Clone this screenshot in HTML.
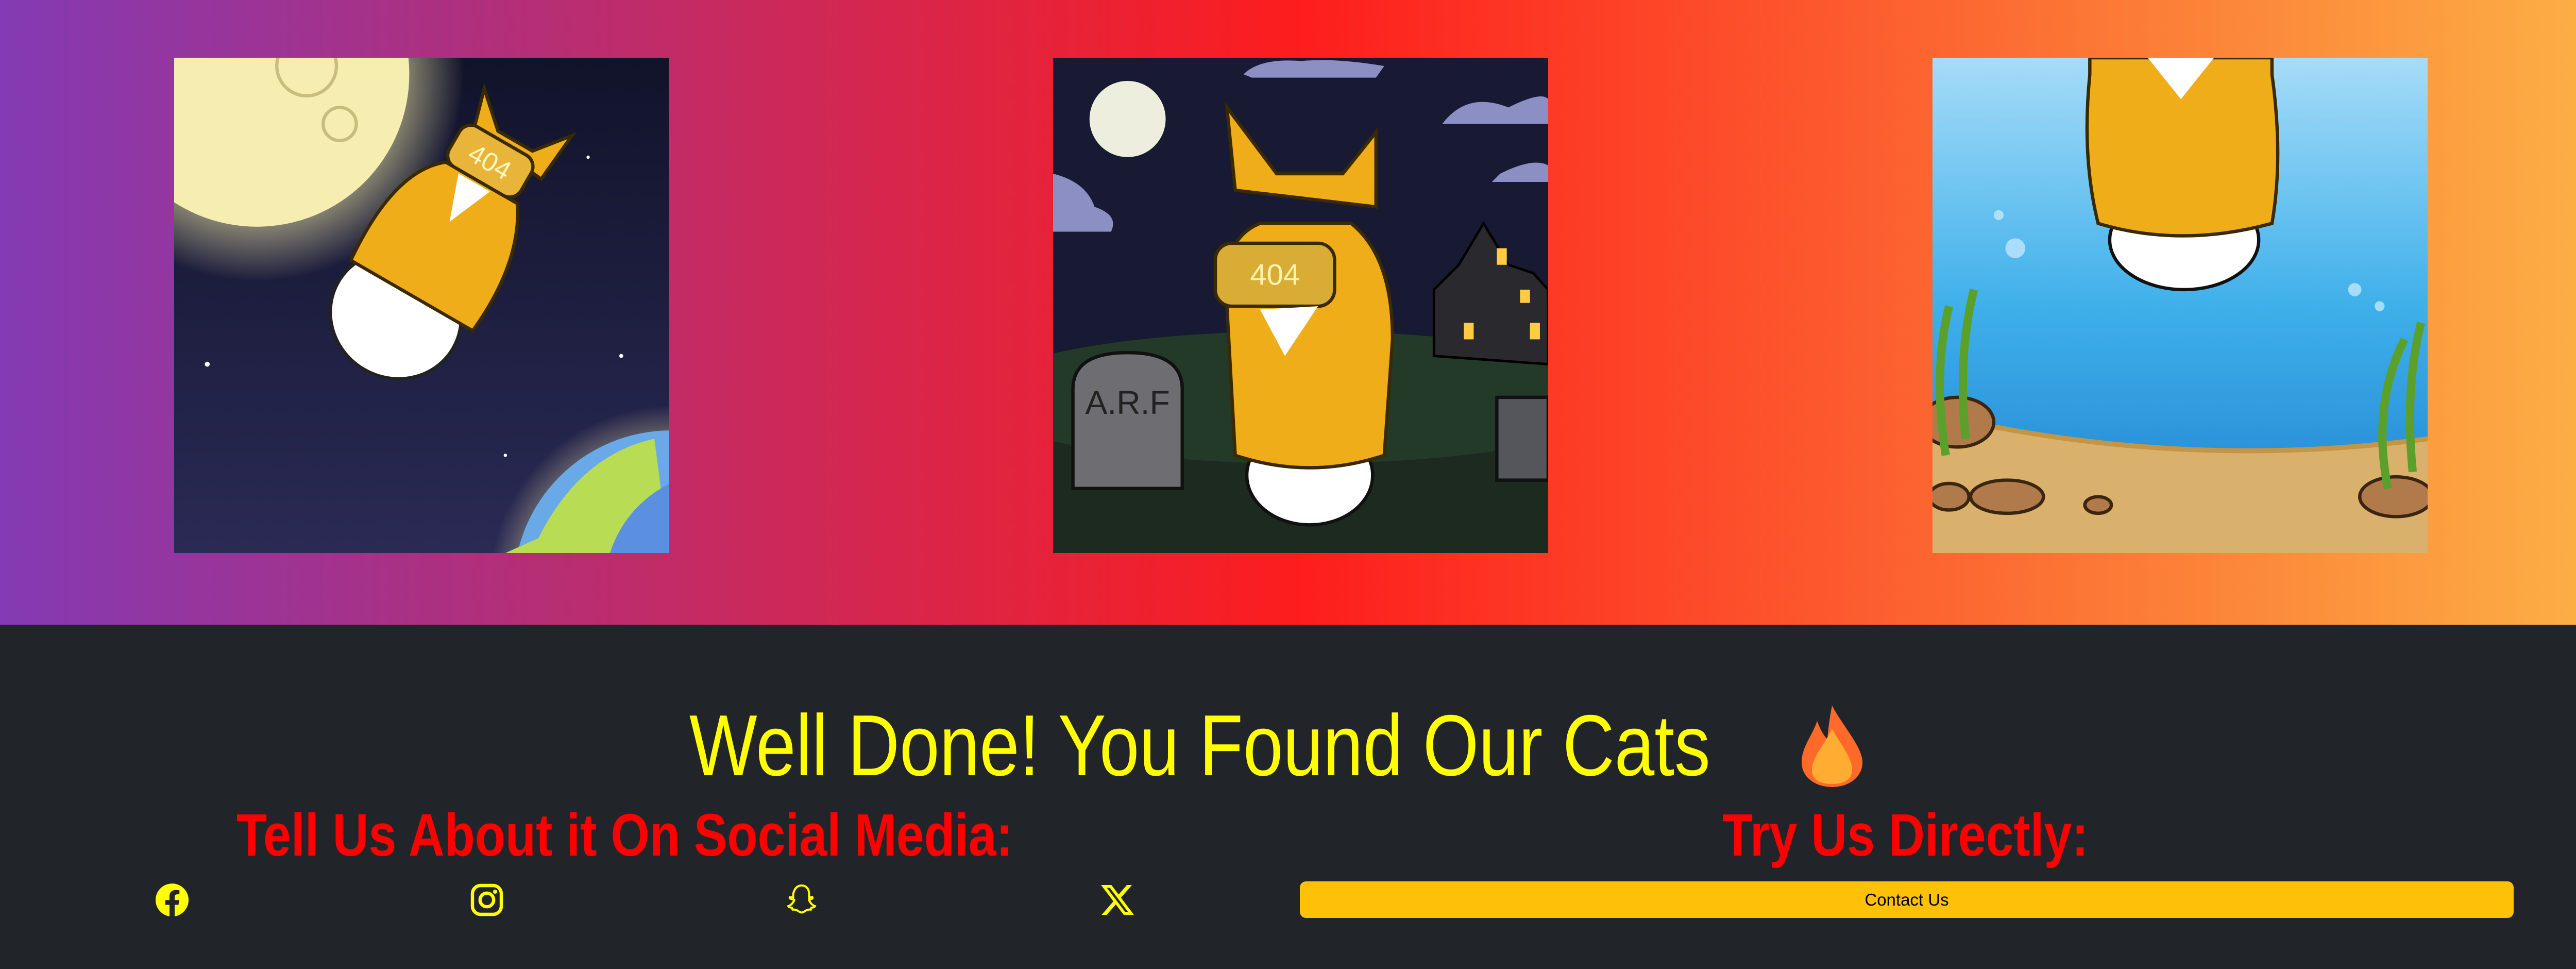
<!DOCTYPE html>
<html><head><meta charset="utf-8"><style>
*{margin:0;padding:0;box-sizing:border-box}
html,body{width:5040px;height:1880px;overflow:hidden;background:#212529;font-family:"Liberation Sans",sans-serif}
.top{position:absolute;left:0;top:0;width:5040px;height:1212px;background:linear-gradient(90deg,#833ab4 0%,#fd1d1d 50%,#fcb045 100%)}
.img{position:absolute;top:112px;width:961px;height:961px}
.img svg{width:100%;height:100%;display:block}
.title{position:absolute;left:1338px;top:1362px;font-size:168px;color:#ffff00;white-space:nowrap;line-height:1;transform:scaleX(.83);transform-origin:left}
.h{position:absolute;top:1562px;font-weight:bold;font-size:116px;color:#ff0000;white-space:nowrap;line-height:1;transform:scaleX(.835);transform-origin:left}
.ic{position:absolute;top:1714px;width:64px;height:64px}
.btn{position:absolute;left:2523px;top:1710px;width:2356px;height:71px;background:#ffc107;border-radius:12px;color:#000;font-size:33px;text-align:center;line-height:71px}
</style></head><body>
<div class="top"></div>

<div class="img" style="left:338px"><svg viewBox="0 0 299 299" preserveAspectRatio="none">
<defs><radialGradient id="g1" cx="0.5" cy="0.5" r="0.5"><stop offset="0.6" stop-color="#fff6b0" stop-opacity=".7"/><stop offset="1" stop-color="#fff6b0" stop-opacity="0"/></radialGradient>
<linearGradient id="sp" x1="0" y1="0" x2="0" y2="1"><stop offset="0" stop-color="#11132a"/><stop offset="1" stop-color="#2a2a55"/></linearGradient></defs>
<rect width="299" height="299" fill="url(#sp)"/>
<circle cx="50" cy="10" r="125" fill="url(#g1)"/>
<circle cx="50" cy="10" r="92" fill="#f6eeb0"/>
<circle cx="80" cy="5" r="18" fill="none" stroke="#c9bd7c" stroke-width="2"/>
<circle cx="100" cy="40" r="10" fill="none" stroke="#c9bd7c" stroke-width="2"/>
<circle cx="300" cy="320" r="110" fill="url(#g1)"/>
<circle cx="300" cy="320" r="95" fill="#6aa9e8"/>
<path d="M220 290 Q245 240 290 230 L299 299 L200 299 Z" fill="#b8dd55"/>
<circle cx="330" cy="320" r="70" fill="#5b8fe0"/>
<g transform="rotate(30 160 130)">
<ellipse cx="150" cy="165" rx="40" ry="38" fill="#fff" stroke="#222" stroke-width="2"/>
<path d="M110 150 Q105 90 130 70 L180 70 Q200 100 195 150 Z" fill="#f0ad1a" stroke="#3a2a00" stroke-width="2"/>
<path d="M135 45 L128 20 L148 38 L172 38 L188 18 L185 50 Z" fill="#f0ad1a" stroke="#3a2a00" stroke-width="2"/>
<rect x="128" y="42" width="50" height="28" rx="8" fill="#e8b43a" stroke="#3a2a00" stroke-width="2"/>
<text x="153" y="62" font-size="16" fill="#fff7c0" text-anchor="middle" font-family="Liberation Sans">404</text>
<path d="M140 72 L150 100 L162 72 Z" fill="#fff"/>
</g>
<circle cx="250" cy="60" r="1" fill="#fff"/><circle cx="20" cy="185" r="1.5" fill="#fff"/><circle cx="270" cy="180" r="1.2" fill="#fff"/><circle cx="200" cy="240" r="1" fill="#fff"/>
</svg></div>

<div class="img" style="left:2044px"><svg viewBox="0 0 299 299" preserveAspectRatio="none">
<rect width="299" height="299" fill="#181a33"/>
<rect y="200" width="299" height="99" fill="#1c2a1f"/>
<ellipse cx="150" cy="205" rx="200" ry="40" fill="#243a28"/>
<circle cx="45" cy="37" r="23" fill="#eeeede"/>
<path d="M115 10 Q125 0 150 2 Q170 0 200 5 L195 12 L120 12 Z" fill="#8c8fc4"/>
<path d="M235 40 Q250 20 275 30 Q295 20 299 25 L299 40 Z" fill="#8c8fc4"/>
<path d="M0 70 Q20 75 25 90 Q40 95 35 105 L0 105 Z" fill="#8c8fc4"/>
<path d="M270 70 Q290 60 299 65 L299 75 L265 75Z" fill="#8c8fc4"/>
<g fill="#2a2a2e" stroke="#000" stroke-width="1.5"><path d="M230 180 L230 140 L245 125 L260 100 L275 125 L290 130 L299 140 L299 185 Z"/></g>
<rect x="268" y="115" width="6" height="10" fill="#ffcc44"/><rect x="282" y="140" width="6" height="8" fill="#ffcc44"/><rect x="248" y="160" width="6" height="10" fill="#ffcc44"/><rect x="288" y="160" width="6" height="10" fill="#ffcc44"/>
<path d="M12 260 L12 200 Q12 178 45 178 Q78 178 78 200 L78 260 Z" fill="#6e6e72" stroke="#111" stroke-width="2"/>
<text x="45" y="215" font-size="20" fill="#222" text-anchor="middle" font-family="Liberation Sans">A.R.F</text>
<rect x="268" y="205" width="31" height="50" fill="#55565b" stroke="#111" stroke-width="2"/>
<ellipse cx="155" cy="252" rx="38" ry="30" fill="#fff" stroke="#111" stroke-width="2"/>
<path d="M105 150 Q100 110 125 100 L180 100 Q205 120 205 170 L200 240 Q155 255 110 240 Z" fill="#f0ad1a" stroke="#3a2a00" stroke-width="2"/>
<path d="M110 80 L105 30 L135 70 L175 70 L195 45 L195 90 Z" fill="#f0ad1a" stroke="#3a2a00" stroke-width="2"/>
<rect x="98" y="112" width="72" height="38" rx="10" fill="#d9ac36" stroke="#3a2a00" stroke-width="2"/>
<text x="134" y="137" font-size="18" fill="#fff3b0" text-anchor="middle" font-family="Liberation Sans">404</text>
<path d="M125 152 L140 180 L160 150 Z" fill="#fff"/>
</svg></div>

<div class="img" style="left:3751px"><svg viewBox="0 0 299 299" preserveAspectRatio="none">
<defs><linearGradient id="sea" x1="0" y1="0" x2="0" y2="1"><stop offset="0" stop-color="#a6dcf8"/><stop offset=".5" stop-color="#3fb0ea"/><stop offset="1" stop-color="#1c7fcf"/></linearGradient></defs>
<rect width="299" height="299" fill="url(#sea)"/>
<path d="M0 215 Q150 250 299 230 L299 299 L0 299 Z" fill="#d9b06c"/>
<path d="M0 215 Q150 250 299 230" fill="none" stroke="#c49545" stroke-width="3"/>
<ellipse cx="15" cy="220" rx="22" ry="15" fill="#b07a4a" stroke="#3a2510" stroke-width="2"/>
<ellipse cx="45" cy="265" rx="22" ry="10" fill="#b07a4a" stroke="#3a2510" stroke-width="2"/>
<ellipse cx="10" cy="265" rx="12" ry="8" fill="#b07a4a" stroke="#3a2510" stroke-width="2"/>
<ellipse cx="100" cy="270" rx="8" ry="5" fill="#b07a4a" stroke="#3a2510" stroke-width="2"/>
<ellipse cx="280" cy="265" rx="22" ry="12" fill="#b07a4a" stroke="#3a2510" stroke-width="2"/>
<path d="M8 240 Q0 190 10 150 M20 230 Q15 180 25 140" stroke="#5aa02a" stroke-width="5" fill="none"/>
<path d="M275 260 Q265 210 285 170 M290 250 Q285 200 295 160" stroke="#5aa02a" stroke-width="5" fill="none"/>
<ellipse cx="152" cy="110" rx="45" ry="30" fill="#fff" stroke="#111" stroke-width="2"/>
<path d="M95 10 Q90 60 100 100 Q150 115 205 100 Q212 60 205 10 L205 0 L95 0 Z" fill="#f0ad1a" stroke="#3a2a00" stroke-width="2"/>
<path d="M130 0 L150 25 L170 0 Z" fill="#fff"/>
<circle cx="50" cy="115" r="6" fill="#bfe6ff" opacity=".8"/><circle cx="40" cy="95" r="3" fill="#bfe6ff" opacity=".8"/><circle cx="255" cy="140" r="4" fill="#bfe6ff" opacity=".8"/><circle cx="270" cy="150" r="3" fill="#bfe6ff" opacity=".8"/>
</svg></div>

<div class="title">Well Done! You Found Our Cats</div>
<svg style="position:absolute;left:3497px;top:1369px" width="118" height="158" viewBox="0 0 118 158"><path d="M59 0 C80 40 118 80 118 110 C118 140 90 158 59 158 C28 158 0 140 0 110 C0 80 20 60 30 30 C40 55 45 60 50 65 C52 40 55 20 59 0Z" fill="#ff6a2a"/><path d="M59 45 C75 75 98 100 98 125 C98 145 80 152 59 152 C38 152 20 145 20 125 C20 100 45 75 59 45Z" fill="#ffac33"/></svg>

<div class="h" style="left:459px">Tell Us About it On Social Media:</div>
<div class="h" style="left:3343px">Try Us Directly:</div>

<svg class="ic" style="left:302px" viewBox="0 0 16 16"><path fill="#ffff00" d="M16 8.05A8 8 0 1 0 6.75 15.950V10.36H4.720V8.050h2.030V6.280c0-2 1.2-3.12 3.020-3.120.88 0 1.8.16 1.8.16v1.970h-1.010c-1 0-1.310.62-1.310 1.250v1.510h2.220l-.36 2.310H9.250v5.590A8 8 0 0 0 16 8.050z"/></svg>
<svg class="ic" style="left:913px" viewBox="0 0 16 16"><rect x="1" y="1" width="14" height="14" rx="4" fill="none" stroke="#ffff00" stroke-width="1.6"/><circle cx="8" cy="8" r="3.3" fill="none" stroke="#ffff00" stroke-width="1.6"/><circle cx="12" cy="4" r="1" fill="#ffff00"/></svg>
<svg class="ic" style="left:1524px" viewBox="0 0 16 16"><path fill="none" stroke="#ffff00" stroke-width="1" d="M8 1C10.5 1 11.6 3 11.6 5v2l1.3-.4c.5 0 .6.5.1.8l-1.4.6c.4 1.3 1.6 2.6 2.9 3-.2.6-1.3.7-1.8.8l-.3.9c-.8-.1-1.5 0-2.3.4-.8.5-1.3 1-2.1 1s-1.3-.5-2.1-1c-.8-.4-1.5-.5-2.3-.4l-.3-.9c-.5-.1-1.6-.2-1.8-.8 1.3-.4 2.5-1.7 2.9-3L2.5 7.4c-.5-.3-.4-.8.1-.8l1.3.4V5C4.4 3 5.5 1 8 1z"/></svg>
<svg class="ic" style="left:2137px" viewBox="0 0 16 16"><path fill="#ffff00" d="M12.6.75h2.45L9.7 6.9 16 15.25h-4.94L7.2 10.2l-4.44 5.05H.3l5.73-6.56L0 .75h5.06l3.5 4.63zM11.74 13.8h1.36L4.32 2.15H2.87z"/></svg>

<div class="btn">Contact Us</div>
</body></html>
